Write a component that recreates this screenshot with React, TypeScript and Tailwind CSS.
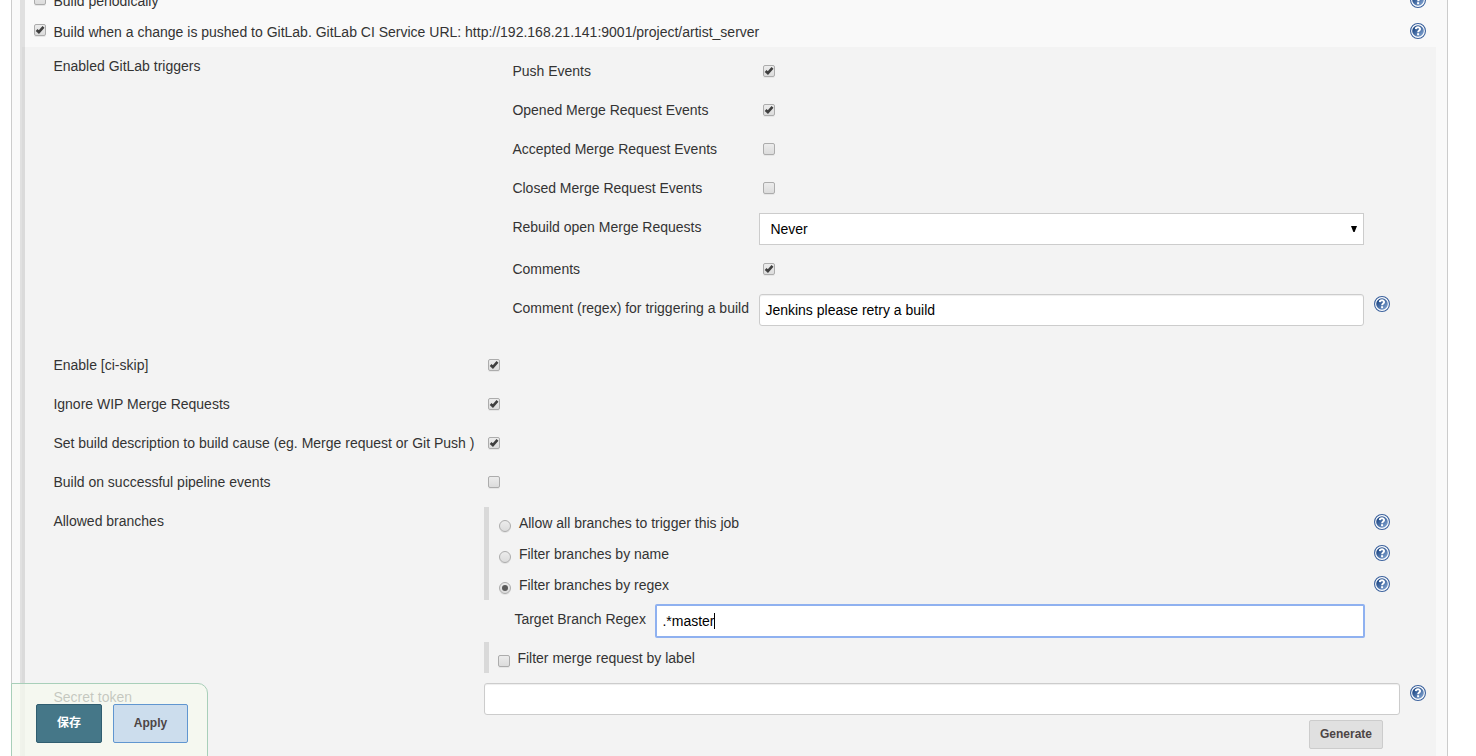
import type { ReactNode } from 'react';

function Check({ on = false, className = '' }: { on?: boolean; className?: string }) {
  return (
    <span
      className={`block h-3 w-3 shrink-0 rounded-[2px] border border-[#acacac] bg-linear-to-b from-[#ececec] to-[#dcdcdc] shadow-[0_1px_0_#e6e6e6] ${className}`}
    >
      {on && (
        <svg viewBox="0 0 10 10" className="block h-[10px] w-[10px]">
          <path d="M1.6 5 3.9 7.2 8.5 1.9" fill="none" stroke="#3f3f3f" strokeWidth="2.6" />
        </svg>
      )}
    </span>
  );
}

function Radio({ on = false }: { on?: boolean }) {
  return (
    <span className="mt-[13px] flex h-3 w-3 shrink-0 items-center justify-center rounded-full border border-[#acacac] bg-linear-to-b from-[#ececec] to-[#dcdcdc] shadow-[0_1px_0_#e2e2e2]">
      {on && <span className="h-[6px] w-[6px] rounded-full bg-[#5a5a5a]" />}
    </span>
  );
}

function Help({ className = '' }: { className?: string }) {
  return (
    <svg viewBox="0 0 16 16" className={`block h-4 w-4 shrink-0 ${className}`}>
      <defs>
        <linearGradient id="help-fill" x1="0" y1="0" x2="1" y2="1">
          <stop offset="0.2" stopColor="#204a87" />
          <stop offset="1" stopColor="#8fb0db" />
        </linearGradient>
      </defs>
      <circle cx="8" cy="8" r="7.45" fill="#fff" stroke="#3a619d" strokeWidth="1.1" />
      <circle cx="8" cy="8" r="5.8" fill="url(#help-fill)" />
      <path d="M5.8 6.1C5.9 3.7 10.1 3.7 10.1 6 10.1 7.6 8.1 7.5 8.1 9.3" fill="none" stroke="#fff" strokeWidth="1.9" />
      <rect x="7.1" y="10.2" width="2" height="2" fill="#fff" />
    </svg>
  );
}

function Row({ label, children }: { label: string; children: ReactNode }) {
  return (
    <div className="flex h-[39px] items-center pb-px">
      <div className="w-[435px]">{label}</div>
      {children}
    </div>
  );
}

function Trigger({ label, on }: { label: string; on?: boolean }) {
  return (
    <div className="flex h-[39px] items-center pb-px">
      <div className="w-[251px]">{label}</div>
      <Check on={on} />
    </div>
  );
}

function Branch({ label, on }: { label: string; on?: boolean }) {
  return (
    <div className="flex h-[31px] items-start border-l-5 border-[#d9d9d9] pl-[10px]">
      <Radio on={on} />
      <span className="ml-[7.5px] pt-[6px]">{label}</span>
      <Help className="mt-[7px] mr-[46px] ml-auto" />
    </div>
  );
}

const field = 'flex h-8 items-center border border-[#ccc] bg-white text-black';

export default function App() {
  return (
    <div className="relative h-[756px] w-[1476px] overflow-hidden bg-white font-['Liberation_Sans',Arial,sans-serif] indent-[0.4px] text-[14px] leading-5 whitespace-nowrap text-[#333]">
      <div className="ml-[11px] h-full w-[1437px] border-x border-[#ccc] bg-[#f9f9f9] pl-2">
        <div className="flex h-[47px] flex-col border-l-5 border-[#e0e0e0]">
          <div className="-mt-[9px] flex h-5 shrink-0 items-center pl-[9px]">
            <Check className="mb-[4px]" />
            <span className="ml-[7px]">Build periodically</span>
            <Help className="mr-[21px] mb-[2px] ml-auto" />
          </div>
          <div className="mt-[11px] flex h-5 shrink-0 items-center pl-[9px]">
            <Check on className="mb-[4px]" />
            <span className="ml-[7px]">
              Build when a change is pushed to GitLab. GitLab CI Service URL: http://192.168.21.141:9001/project/artist_server
            </span>
            <Help className="mr-[21px] mb-[2px] ml-auto" />
          </div>
        </div>

        <div className="mr-[11px] h-[709px] border-l-2 border-[#e0e0e0]">
          <div className="h-full border-l-3 border-[#dadada] bg-[#f3f3f3] pt-[5px] pl-7">
            <div className="flex h-[294px]">
              <div className="mt-1 w-[459px]">Enabled GitLab triggers</div>
              <div className="grow">
                <Trigger label="Push Events" on />
                <Trigger label="Opened Merge Request Events" on />
                <Trigger label="Accepted Merge Request Events" />
                <Trigger label="Closed Merge Request Events" />
                <div className="flex h-[42px] items-start">
                  <div className="w-[247px] pt-[9px]">Rebuild open Merge Requests</div>
                  <div className={`${field} mt-[5px] w-[605px] justify-between pr-[6px] pl-[10px]`}>
                    <span>Never</span>
                    <svg viewBox="0 0 6 6" className="h-[6px] w-[6px]">
                      <path d="M0 0H6L3.6 6H2.4Z" fill="#000" />
                    </svg>
                  </div>
                </div>
                <Trigger label="Comments" on />
                <div className="flex h-[57px] items-start">
                  <div className="w-[247px] pt-[9px]">Comment (regex) for triggering a build</div>
                  <div className={`${field} mt-[5px] w-[605px] rounded-[3px] pl-[5px] shadow-[inset_0_1px_1px_#eee]`}>
                    Jenkins please retry a build
                  </div>
                  <Help className="mt-[7px] ml-[10px]" />
                </div>
              </div>
            </div>

            <Row label="Enable [ci-skip]"><Check on /></Row>
            <Row label="Ignore WIP Merge Requests"><Check on /></Row>
            <Row label="Set build description to build cause (eg. Merge request or Git Push )"><Check on /></Row>
            <Row label="Build on successful pipeline events"><Check /></Row>

            <div className="flex h-[176px]">
              <div className="w-[431px] pt-[9px]">Allowed branches</div>
              <div className="grow pt-[5px]">
                <Branch label="Allow all branches to trigger this job" />
                <Branch label="Filter branches by name" />
                <Branch label="Filter branches by regex" on />
                <div className="flex h-[42px] items-start pl-[30px]">
                  <div className="w-[141px] pt-[9px]">Target Branch Regex</div>
                  <div className="mt-1 flex h-[34px] w-[710px] items-center rounded-[2px] border-2 border-[#8fb1f0] bg-white pl-[5px] text-black">
                    .*master<span className="-ml-px h-4 w-px bg-black" />
                  </div>
                </div>
                <div className="flex h-[31px] items-start border-l-5 border-[#d9d9d9] pl-[9px]">
                  <Check className="mt-[13px]" />
                  <span className="ml-[7px] pt-[6px]">Filter merge request by label</span>
                </div>
              </div>
            </div>

            <div className="flex">
              <div className="w-[431px] pt-[9px]">Secret token</div>
              <div className="mt-[5px] w-[916px]">
                <div className={`${field} rounded-[3px] shadow-[inset_0_1px_1px_#eee]`} />
                <div className="mt-[5px] mr-[17px] ml-auto flex h-[29px] w-[74px] items-center justify-center rounded-[2px] border border-[#ccc] bg-[#e0e0e0] pb-[2px] indent-0 text-[12px] font-bold text-[#4d4545]">
                  Generate
                </div>
              </div>
              <Help className="mt-[7px] ml-[10px]" />
            </div>
          </div>
        </div>
      </div>

      <div className="absolute top-[683px] left-[11px] flex h-[74px] w-[197px] items-start gap-[11px] rounded-tr-[10px] border border-[#a8cfb9] bg-[#f5f9ef]/75 pt-5 pl-6 indent-0 text-[12px] font-bold">
        <div className="flex h-[39px] w-[66px] items-center justify-center rounded-[2px] border border-[#305e70] bg-[#457788] pb-[2px] font-['Liberation_Sans','Noto_Sans_CJK_SC',sans-serif] text-white">
          保存
        </div>
        <div className="flex h-[39px] w-[75px] items-center justify-center rounded-[2px] border border-[#6096d0] bg-[#ccdded] pb-[2px] text-[#4d4545]">
          Apply
        </div>
      </div>
    </div>
  );
}
